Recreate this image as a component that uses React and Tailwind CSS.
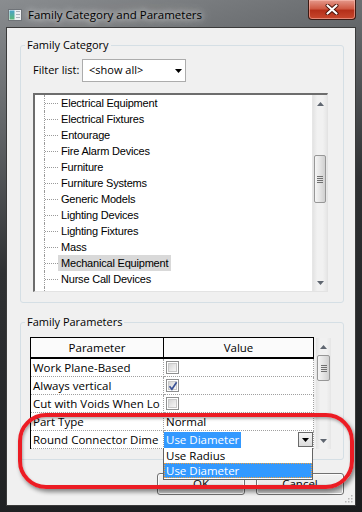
import React from 'react'

const ui = "font-['Open_Sans',sans-serif]"
const classic = "font-['Liberation_Sans',Arial,sans-serif]"

const categories = [
    'Electrical Equipment',
    'Electrical Fixtures',
    'Entourage',
    'Fire Alarm Devices',
    'Furniture',
    'Furniture Systems',
    'Generic Models',
    'Lighting Devices',
    'Lighting Fixtures',
    'Mass',
    'Mechanical Equipment',
    'Nurse Call Devices',
    'Parking',
]

const params = [
    { name: 'Work Plane-Based', check: false },
    { name: 'Always vertical', check: true },
    { name: 'Cut with Voids When Lo', check: false },
    { name: 'Part Type', text: 'Normal' },
]

const AppIcon = () => (
    <svg width="14" height="12" viewBox="0 0 14 12">
        <defs>
            <linearGradient id="ic" x1="0" y1="0" x2="0" y2="1">
                <stop offset="0" stopColor="#4aa3c8" />
                <stop offset="1" stopColor="#5cb878" />
            </linearGradient>
        </defs>
        <rect x="0.5" y="0.5" width="13" height="11" fill="#eef0f2" stroke="#6f7378" />
        <rect x="1.5" y="1.5" width="5" height="9" fill="url(#ic)" />
        <rect x="8" y="2" width="4" height="1" fill="#a9b0b8" />
        <rect x="8" y="5" width="4" height="1" fill="#a9b0b8" />
        <rect x="8" y="8" width="4" height="1" fill="#a9b0b8" />
    </svg>
)

const CloseX = () => (
    <svg width="14" height="11" viewBox="0 0 14 11">
        <path d="M2.5 1.5l9 8M11.5 1.5l-9 8" stroke="#4a1208" strokeWidth="4" strokeLinecap="round" />
        <path d="M2.5 1.5l9 8M11.5 1.5l-9 8" stroke="#ffffff" strokeWidth="2.2" strokeLinecap="round" />
    </svg>
)

const Arrow = ({ down }) => (
    <div className="flex h-[17px] items-center justify-center">
        <svg width="7" height="4" viewBox="0 0 7 4">
            <path d={down ? 'M0 0h7L3.5 4z' : 'M0 4h7L3.5 0z'} fill="#5f6670" />
        </svg>
    </div>
)

const ScrollBar = ({ className, thumb }) => (
    <div className={`flex w-[15px] flex-col bg-[linear-gradient(90deg,#e3e3e3,#f1f1f1_30%,#f1f1f1_70%,#e6e6e6)] ${className}`}>
        <Arrow />
        <div className="flex-1">
            <div className={`mx-[1px] flex flex-col items-center justify-center gap-[1px] rounded-[2px] border border-[#979797] bg-[linear-gradient(90deg,#f5f5f5,#e4e4e4_50%,#d0d0d0)] ${thumb}`}>
                <span className="h-[1px] w-[6px] bg-[#707070]" />
                <span className="h-[1px] w-[6px] bg-[#707070]" />
                <span className="h-[1px] w-[6px] bg-[#707070]" />
                <span className="h-[1px] w-[6px] bg-[#707070]" />
            </div>
        </div>
        <Arrow down />
    </div>
)

const Check = ({ checked }) => (
    <span className="relative flex h-[13px] w-[13px] items-center justify-center border border-[#8e8f8f] bg-white">
        <span className="h-[9px] w-[9px] border border-[#c9c9c9] bg-[linear-gradient(135deg,#d6d6d6,#f7f7f7)]" />
        {checked && (
            <svg className="absolute left-[1px] top-[1px]" width="10" height="10" viewBox="0 0 10 10">
                <path d="M1.5 5.2l2.4 3L8.6 1.2" fill="none" stroke="#3c5396" strokeWidth="1.7" />
            </svg>
        )}
    </span>
)

const TriDown = () => (
    <svg width="7" height="4" viewBox="0 0 7 4">
        <path d="M0 0h7L3.5 4z" fill="#000" />
    </svg>
)

export default function App() {
    return (
        <div className={`relative flex h-[512px] w-[362px] flex-col overflow-hidden bg-[linear-gradient(165deg,#8a8d90_0%,#606366_22%,#2f3133_45%,#1a1b1d_100%)] ${ui}`}>
            {/* title bar */}
            <div className="flex h-[27px] shrink-0 items-start">
                <div className="ml-[8px] mt-[9px]"><AppIcon /></div>
                <span className="ml-[6px] mt-[7px] text-[11.5px] leading-[16px] text-black [text-shadow:0_0_6px_rgba(255,255,255,0.95),0_0_12px_rgba(255,255,255,0.7)]">
                    Family Category and Parameters
                </span>
                <div className="ml-auto mr-[6px] flex h-[20px] w-[48px] items-center justify-center rounded-b-[4px] border border-t-0 border-[#3b1a14] bg-[linear-gradient(180deg,#e5998b_0%,#cf5a44_45%,#b5301a_55%,#c8482e_100%)] shadow-[inset_0_0_0_1px_rgba(255,200,190,0.5)]">
                    <CloseX />
                </div>
            </div>

            {/* client area */}
            <div className="mx-[6px] mb-[6px] flex flex-1 flex-col border border-[#3a3a3a] bg-[#f0f0f0] text-black">
                <fieldset className="ml-[13px] mr-[11px] mt-[9px] rounded-[3px] border border-[#d5dfe5]">
                    <legend className="ml-[4px] px-[2px] text-[11px] leading-[16px]">Family Category</legend>
                    <div className="pb-[10px] pl-[12px] pr-[15px]">
                        <div className="mt-[6px] flex h-[23px] items-center">
                            <span className="w-[49px] text-[11px]">Filter list:</span>
                            <div className="flex h-[23px] w-[104px] items-center justify-between border border-[#acacac] bg-white pl-[6px] pr-[3px] text-[11px]">
                                <span>&lt;show all&gt;</span>
                                <TriDown />
                            </div>
                        </div>
                        <div className="mt-[11px] flex h-[199px] border-b border-l-2 border-r border-t-2 border-b-[#e3e3e3] border-l-[#6d6d6d] border-r-[#e3e3e3] border-t-[#6d6d6d] bg-white">
                            <div className={`flex-1 overflow-hidden text-[11px] tracking-[-0.2px] ${classic}`}>
                                {categories.map(c => (
                                    <div key={c} className="flex h-[16px] items-center pl-[9px]">
                                        <div className="flex h-full items-center border-l border-dotted border-[#9a9a9a]">
                                            <span className="w-[13px] border-t border-dotted border-[#9a9a9a]" />
                                        </div>
                                        <span className={`flex h-full items-center px-[3px] ${c === 'Mechanical Equipment' ? 'bg-[#d9d9d9]' : ''}`}>{c}</span>
                                    </div>
                                ))}
                            </div>
                            <ScrollBar className="border-l border-[#e6e6e6]" thumb="mt-[43px] h-[48px]" />
                        </div>
                    </div>
                </fieldset>

                <fieldset className="ml-[13px] mr-[11px] mt-[11px] rounded-[3px] border border-[#d5dfe5]">
                    <legend className="ml-[4px] px-[2px] text-[11px] leading-[16px]">Family Parameters</legend>
                    <div className="mt-[7px] flex gap-[2px] pb-[10px] pl-[9px] pr-[12px] text-[11.5px]">
                        <div className="w-[284px] border-l border-t border-black bg-white">
                            <div className="flex h-[21px] border-b-2 border-black bg-[#fbfbfb]">
                                <div className="flex w-[133px] items-center justify-center border-r border-black">Parameter</div>
                                <div className="flex flex-1 items-center justify-center border-r border-black">Value</div>
                            </div>
                            {params.map(p => (
                                <div key={p.name} className="flex h-[18px]">
                                    <div className="flex w-[133px] items-center overflow-hidden whitespace-nowrap border-b border-r border-dotted border-[#a0a0a0] pl-[2px]">{p.name}</div>
                                    <div className="flex flex-1 items-center border-b border-r border-dotted border-[#a0a0a0] pl-[2px]">
                                        {p.text ? p.text : <Check checked={p.check} />}
                                    </div>
                                </div>
                            ))}
                            <div className="flex h-[18px]">
                                <div className="flex w-[133px] items-center overflow-hidden whitespace-nowrap border-b border-r border-dotted border-[#a0a0a0] pl-[2px]">Round Connector Dime</div>
                                <div className="relative flex flex-1 items-center border-b border-r border-dotted border-[#a0a0a0]">
                                    <span className="flex h-[16px] items-center bg-[#3399ff] px-[2px] text-white">Use Diameter</span>
                                    <span className="ml-auto flex h-[15px] w-[15px] items-center justify-center border border-[#6a6a6a] bg-[linear-gradient(180deg,#f6f6f6,#dcdcdc)]">
                                        <TriDown />
                                    </span>
                                    <div className="absolute left-[-1px] top-full z-10 h-[32px] w-[150px] border border-t-0 border-[#646464] bg-white">
                                        <div className="flex h-[15px] items-center pl-[2px]">Use Radius</div>
                                        <div className="flex h-[15px] items-center border border-dotted border-[#f0a040] bg-[#3399ff] pl-[1px] text-white">Use Diameter</div>
                                    </div>
                                </div>
                            </div>
                        </div>
                        <ScrollBar className="mt-[1px] h-[111px]" thumb="h-[26px]" />
                    </div>
                </fieldset>

                <div className="mt-[13px] flex justify-end gap-[11px] pr-[11px] text-[11.5px]">
                    <div className="flex h-[22px] w-[88px] items-center justify-center rounded-[3px] border border-[#707070] bg-[linear-gradient(180deg,#f2f2f2_0%,#ebebeb_49%,#dddddd_50%,#cfcfcf_100%)] shadow-[inset_0_0_0_1px_#fcfcfc]">OK</div>
                    <div className="flex h-[22px] w-[88px] items-center justify-center rounded-[3px] border border-[#707070] bg-[linear-gradient(180deg,#f2f2f2_0%,#ebebeb_49%,#dddddd_50%,#cfcfcf_100%)] shadow-[inset_0_0_0_1px_#fcfcfc]">Cancel</div>
                </div>

                <div className="mt-auto flex justify-end pb-[2px] pr-[2px]">
                    <svg width="8" height="8" viewBox="0 0 8 8">
                        <rect x="6" y="0" width="1.5" height="1.5" fill="#b5b5b5" />
                        <rect x="3" y="3" width="1.5" height="1.5" fill="#b5b5b5" />
                        <rect x="6" y="3" width="1.5" height="1.5" fill="#b5b5b5" />
                        <rect x="0" y="6" width="1.5" height="1.5" fill="#b5b5b5" />
                        <rect x="3" y="6" width="1.5" height="1.5" fill="#b5b5b5" />
                        <rect x="6" y="6" width="1.5" height="1.5" fill="#b5b5b5" />
                    </svg>
                </div>
            </div>

            {/* red callout drawn over the dialog */}
            <div className="pointer-events-none absolute left-[18px] top-[413px] z-20 h-[76px] w-[336px] rounded-[28px] border-[4px] border-[#ec1c24] shadow-[2px_3px_4px_rgba(0,0,0,0.45),inset_1px_2px_3px_rgba(0,0,0,0.3)]" />
        </div>
    )
}
